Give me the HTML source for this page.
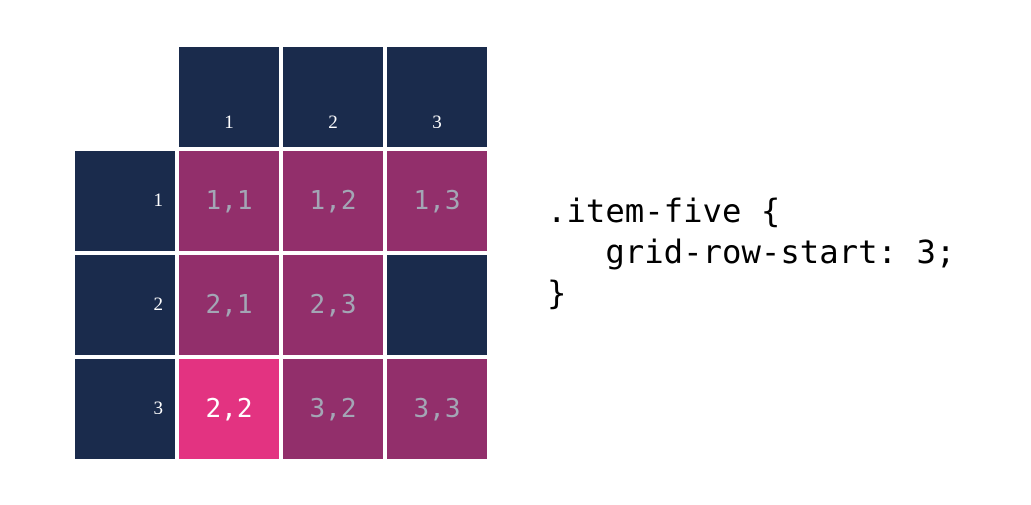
<!DOCTYPE html>
<html><head><meta charset="utf-8"><style>
html,body{margin:0;padding:0;background:#fff;width:1031px;height:505px;overflow:hidden;position:relative}
.c{position:absolute;width:100px;height:100px;box-sizing:border-box}
.n{background:#1a2b4c;color:#fff;font-family:"Liberation Serif",serif;font-size:19px}
.h{display:flex;align-items:flex-end;justify-content:center;padding-bottom:13px}
.r{display:flex;align-items:center;justify-content:flex-end;padding-right:12px}
.p{background:#922f6b;color:#a3a6b5;font-family:"DejaVu Sans Mono","Liberation Mono",monospace;font-size:26px;display:flex;align-items:center;justify-content:center}
.hi{background:#e33381;color:#fff}
.code{position:absolute;left:547px;top:191px;font-family:"DejaVu Sans Mono","Liberation Mono",monospace;font-size:32.3px;line-height:41px;color:#000;white-space:pre}
</style></head><body>
<div class="c n h" style="left:179px;top:47px">1</div>
<div class="c n h" style="left:283px;top:47px">2</div>
<div class="c n h" style="left:387px;top:47px">3</div>
<div class="c n r" style="left:75px;top:151px">1</div>
<div class="c n r" style="left:75px;top:255px">2</div>
<div class="c n r" style="left:75px;top:359px">3</div>
<div class="c p" style="left:179px;top:151px">1,1</div>
<div class="c p" style="left:283px;top:151px">1,2</div>
<div class="c p" style="left:387px;top:151px">1,3</div>
<div class="c p" style="left:179px;top:255px">2,1</div>
<div class="c p" style="left:283px;top:255px">2,3</div>
<div class="c n" style="left:387px;top:255px"></div>
<div class="c p hi" style="left:179px;top:359px">2,2</div>
<div class="c p" style="left:283px;top:359px">3,2</div>
<div class="c p" style="left:387px;top:359px">3,3</div>
<div class="code">.item-five {
   grid-row-start: 3;
}</div>
</body></html>
